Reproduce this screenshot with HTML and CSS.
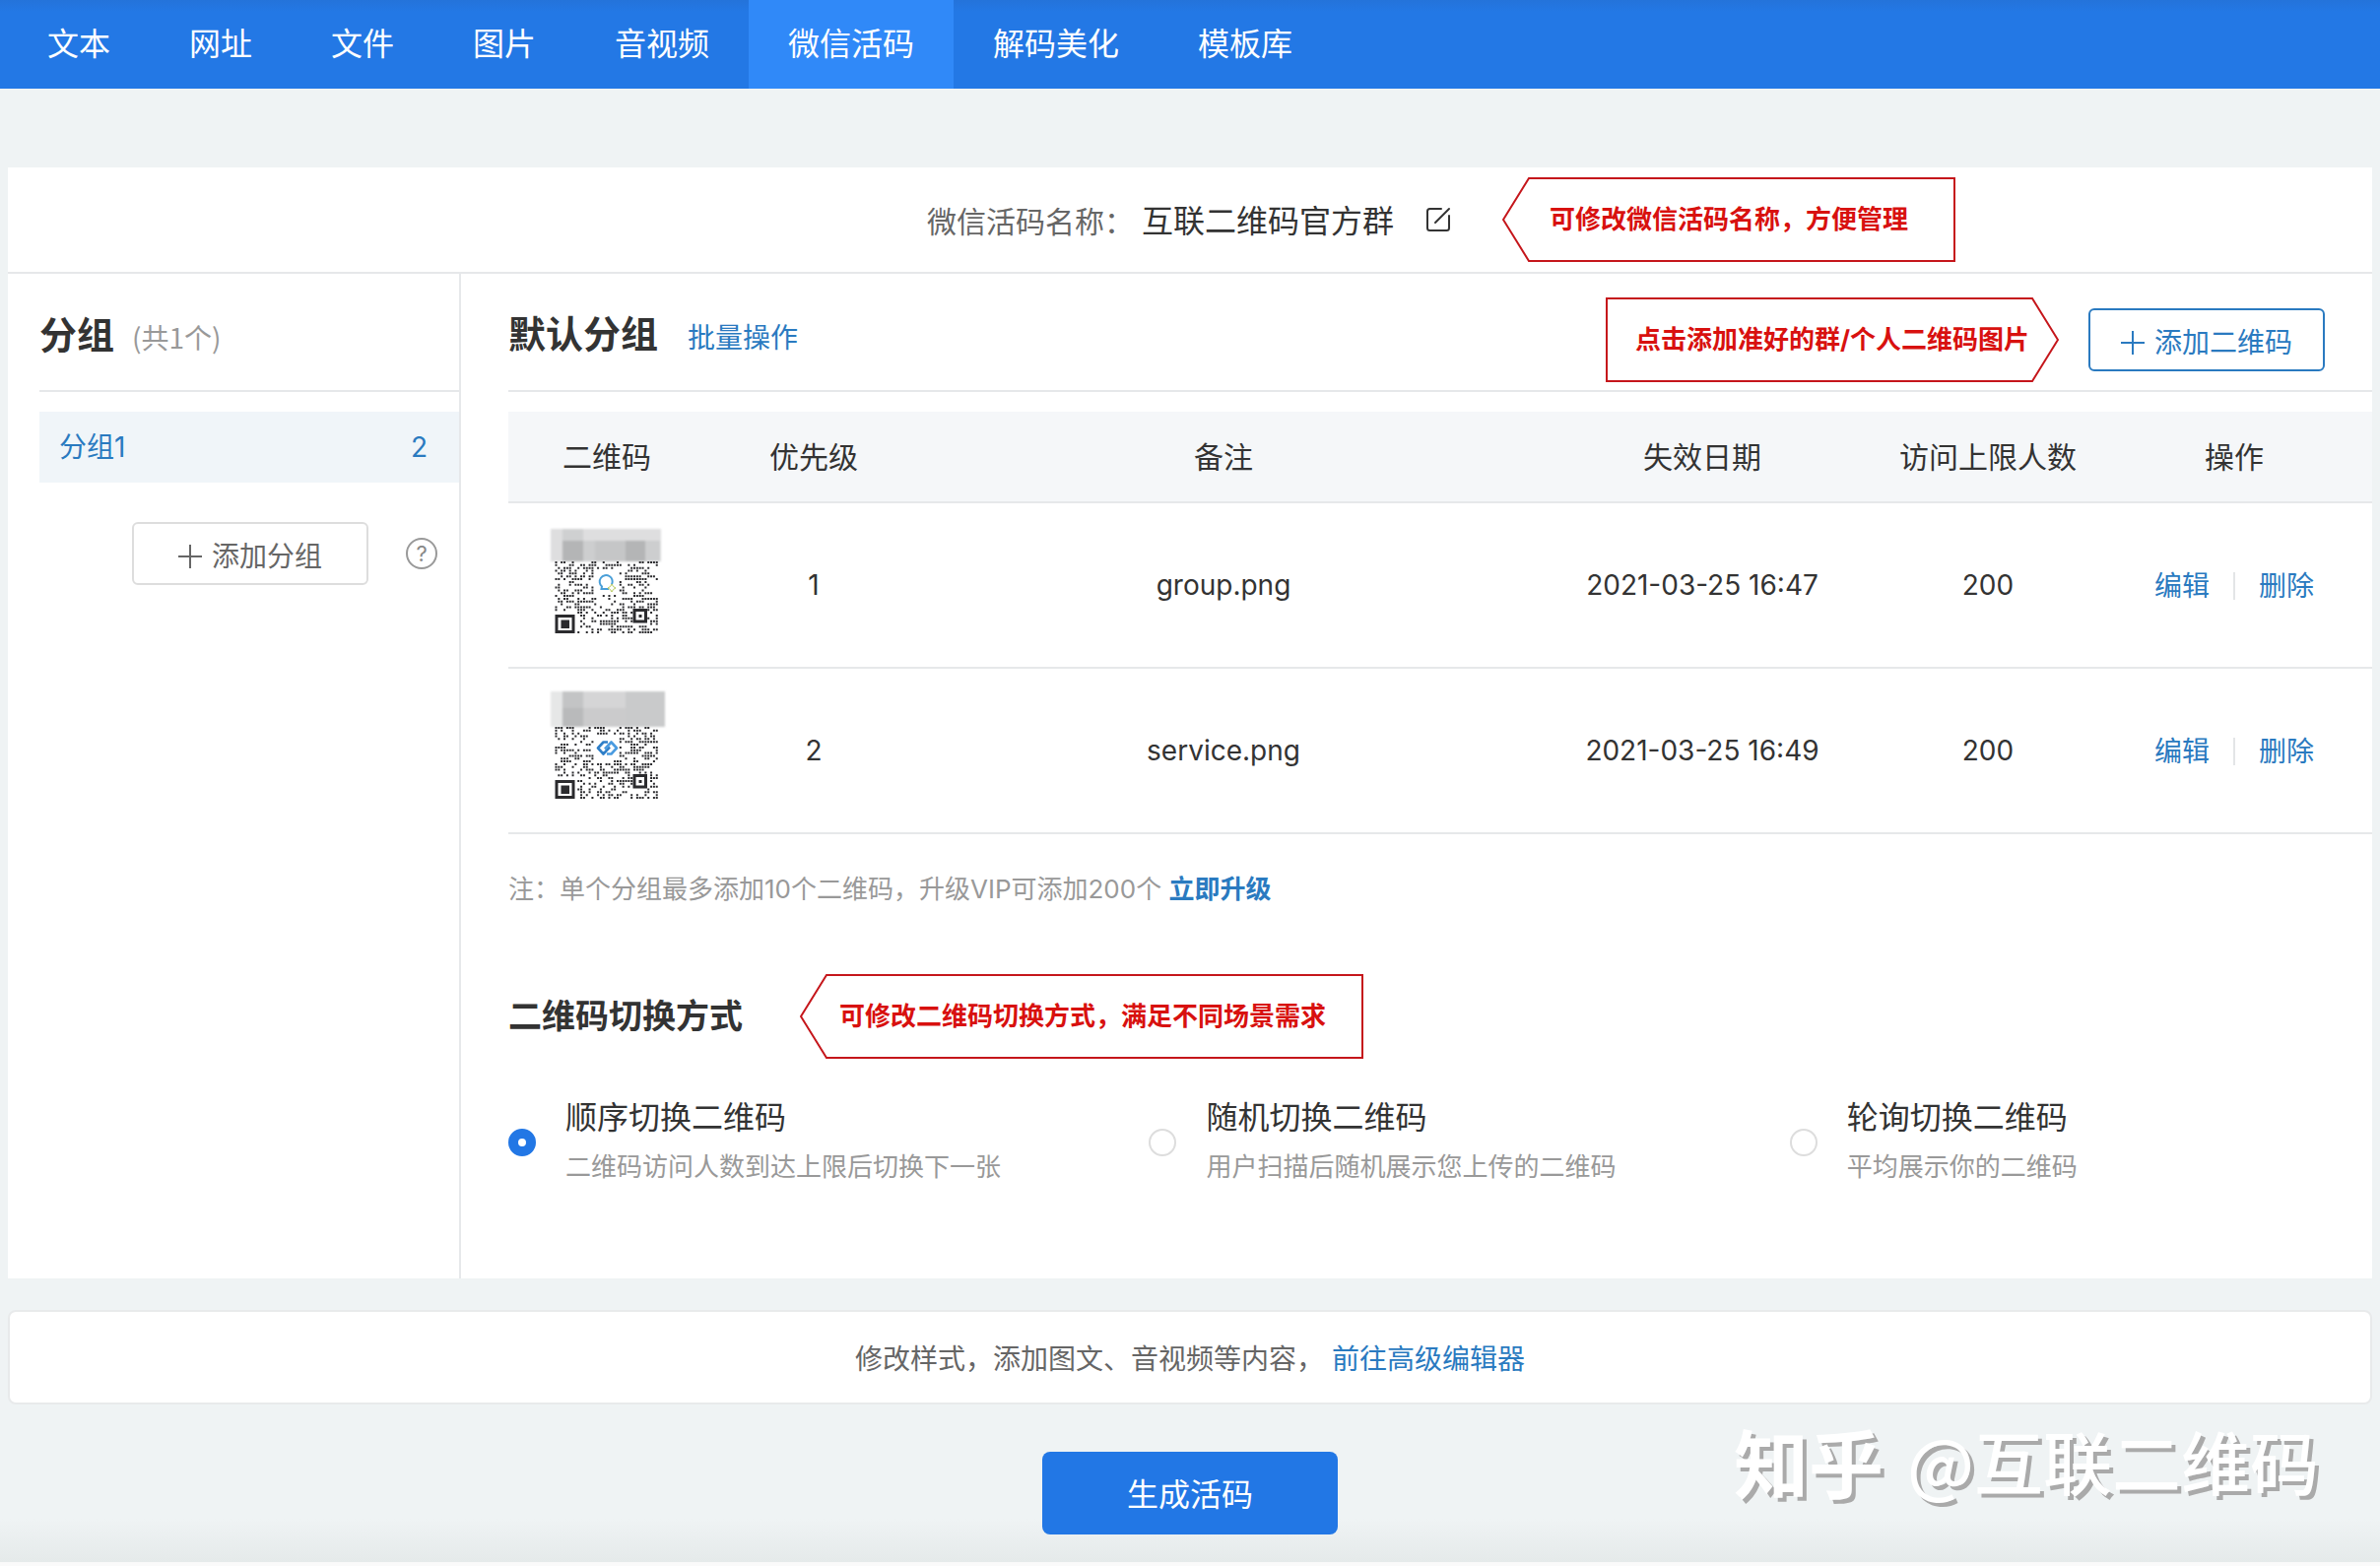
FILE: index.html
```html
<!DOCTYPE html>
<html lang="zh-CN">
<head>
<meta charset="utf-8">
<meta name="viewport" content="width=device-width, initial-scale=1">
<title>微信活码</title>
<link rel="stylesheet" href="styles.css">
</head>
<body>
<nav class="nav">
  <a class="nav-item" href="#">文本</a>
  <a class="nav-item" href="#">网址</a>
  <a class="nav-item" href="#">文件</a>
  <a class="nav-item" href="#">图片</a>
  <a class="nav-item" href="#">音视频</a>
  <a class="nav-item active" href="#" aria-current="page">微信活码</a>
  <a class="nav-item" href="#">解码美化</a>
  <a class="nav-item" href="#">模板库</a>
</nav>

<main class="page">
  <section class="card">
    <header class="name-bar">
      <span class="name-label">微信活码名称：</span>
      <h1 class="name-value">互联二维码官方群</h1>
      <button class="edit-button" type="button" aria-label="修改名称">
        <svg width="28" height="28" viewBox="0 0 28 28" fill="none" stroke="#333" stroke-width="2" stroke-linecap="round" stroke-linejoin="round">
          <path d="M16 3H4.500Q2 3 2 5.500V22.500Q2 25 4.500 25H21.500Q24 25 24 22.500V10"/>
          <path d="M10 17L24 3"/>
        </svg>
        <span class="callout callout-name">
          <svg class="callout-tip" width="28" height="86" viewBox="0 0 28 86"><path d="M28 1H27L1 43L27 85H28"/></svg>
          <span class="callout-body">可修改微信活码名称，方便管理</span>
        </span>
      </button>
    </header>

    <div class="columns">
      <aside class="sidebar">
        <div class="section-head">
          <div class="title-line">
            <h2 class="heading">分组</h2>
            <span class="count">(共1个)</span>
          </div>
        </div>
        <a class="group" href="#"><span>分组1</span><span>2</span></a>
        <div class="group-actions">
          <button class="button" type="button">
            <svg class="plus" width="24" height="24" viewBox="0 0 24 24"><path d="M12 0V24M0 12H24"/></svg>添加分组
          </button>
          <button class="help" type="button" aria-label="帮助">?</button>
        </div>
      </aside>

      <section class="content">
        <div class="section-head">
          <div class="title-line">
            <h2 class="heading">默认分组</h2>
            <a class="batch" href="#">批量操作</a>
          </div>
          <div class="head-actions">
            <div class="callout">
              <span class="callout-body body-left">点击添加准好的群/个人二维码图片</span>
              <svg class="callout-tip" width="28" height="86" viewBox="0 0 28 86"><path d="M0 1H1L27 43L1 85H0"/></svg>
            </div>
            <button class="button button-primary" type="button">
              <svg class="plus" width="24" height="24" viewBox="0 0 24 24"><path d="M12 0V24M0 12H24"/></svg>添加二维码
            </button>
          </div>
        </div>

        <table class="codes">
          <colgroup>
            <col class="col-code"><col class="col-rank"><col><col class="col-date"><col class="col-limit"><col class="col-ops">
          </colgroup>
          <thead>
            <tr><th>二维码</th><th>优先级</th><th>备注</th><th>失效日期</th><th>访问上限人数</th><th>操作</th></tr>
          </thead>
          <tbody>
            <tr>
              <td>
                <svg class="qr" width="128" height="128" viewBox="0 0 128 128" role="img" aria-label="group.png">
                  <g class="mosaic">
                    <path fill="#dededf" d="M7 7H119V40H7Z"/>
                    <path fill="#c5c6c7" d="M19 19H118V40H19Z"/>
                    <path fill="#cfd0d1" d="M19 7H40V19H19Z"/>
                    <path fill="#b4b5b6" d="M19 19H40V40H19ZM83 19H103V40H83Z"/>
                    <path fill="#cdcecf" d="M103 19H118V40H103ZM40 19H52V40H40Z"/>
                  </g>
                  <path class="dots" data-seed="7"/>
                  <path class="finder" d="M13 95.500H30V111.500H13Z"/>
                  <path class="finder-core" d="M17.500 99.500H26V108H17.500Z"/>
                  <path class="finder" d="M92 89.500H103.500V101H92Z"/>
                  <path class="finder-core" d="M96.500 94H99.500V97H96.500Z"/>
                  <path fill="none" stroke="#4a9fd8" stroke-width="2" d="M69 63.500A6.500 6.500 0 1 0 59 65.500L58.500 68H66"/>
                  <path fill="#fff" stroke="#b7c95c" d="M69 63L70.500 65.500L73 67L70.500 68.500L69 71L67.500 68.500L65 67L67.500 65.500Z"/>
                </svg>
              </td>
              <td>1</td><td>group.png</td><td>2021-03-25 16:47</td><td>200</td>
              <td><div class="ops"><a href="#">编辑</a><a href="#">删除</a></div></td>
            </tr>
            <tr>
              <td>
                <svg class="qr" width="128" height="128" viewBox="0 0 128 128" role="img" aria-label="service.png">
                  <g class="mosaic">
                    <path fill="#e6e7e7" d="M7 4H19V40H7Z"/>
                    <path fill="#d5d5d6" d="M19 4H123V21H19Z"/>
                    <path fill="#cbcbcc" d="M19 21H123V40H19Z"/>
                    <path fill="#c3c4c5" d="M19 4H40V21H19Z"/>
                    <path fill="#b9babb" d="M19 21H40V40H19Z"/>
                    <path fill="#c9cacb" d="M83 4H123V40H83Z"/>
                  </g>
                  <path class="dots" data-seed="23"/>
                  <path class="finder" d="M13 95.500H30V111.500H13Z"/>
                  <path class="finder-core" d="M17.500 99.500H26V108H17.500Z"/>
                  <path class="finder" d="M92 89.500H103.500V101H92Z"/>
                  <path class="finder-core" d="M96.500 94H99.500V97H96.500Z"/>
                  <path fill="none" stroke="#2f7fc8" stroke-width="2.600" stroke-linejoin="round" d="M65 55.500H60.500L55 61.500L60.500 67.500L67 60.500"/>
                  <path fill="none" stroke="#4a9be0" stroke-width="2.600" stroke-linejoin="round" d="M62 62.500L68.500 55.500L74 61.500L68.500 67.500H64"/>
                </svg>
              </td>
              <td>2</td><td>service.png</td><td>2021-03-25 16:49</td><td>200</td>
              <td><div class="ops"><a href="#">编辑</a><a href="#">删除</a></div></td>
            </tr>
          </tbody>
        </table>

        <p class="note">注：单个分组最多添加10个二维码，升级VIP可添加200个 <a href="#">立即升级</a></p>

        <div class="mode-head">
          <h2 class="subheading">二维码切换方式</h2>
          <div class="callout">
            <svg class="callout-tip" width="28" height="86" viewBox="0 0 28 86"><path d="M28 1H27L1 43L27 85H28"/></svg>
            <span class="callout-body body-mode">可修改二维码切换方式，满足不同场景需求</span>
          </div>
        </div>

        <div class="modes">
          <label class="mode">
            <input class="radio" type="radio" name="mode" checked>
            <span class="mode-text"><span class="mode-title">顺序切换二维码</span><span class="mode-desc">二维码访问人数到达上限后切换下一张</span></span>
          </label>
          <label class="mode">
            <input class="radio" type="radio" name="mode">
            <span class="mode-text"><span class="mode-title">随机切换二维码</span><span class="mode-desc">用户扫描后随机展示您上传的二维码</span></span>
          </label>
          <label class="mode">
            <input class="radio" type="radio" name="mode">
            <span class="mode-text"><span class="mode-title">轮询切换二维码</span><span class="mode-desc">平均展示你的二维码</span></span>
          </label>
        </div>
      </section>
    </div>
  </section>

  <p class="editor-link"><span>修改样式，添加图文、音视频等内容，</span><a href="#">前往高级编辑器</a></p>
</main>

<footer class="footer">
  <button class="submit" type="button">生成活码</button>
  <div class="watermark"><span class="brand">知乎</span><span>@互联二维码</span></div>
</footer>
<script src="qr.js"></script>
</body>
</html>
```
FILE: styles.css
```css
* { box-sizing: border-box; }

body {
  margin: 0;
  min-height: 100vh;
  display: flex;
  flex-direction: column;
  background: #eff3f4;
  color: #333;
  font-family: Inter, "Noto Sans CJK SC", sans-serif;
  font-size: 28px;
  line-height: 40px;
}

h1, h2, p { margin: 0; }
a { color: #2a7ac0; text-decoration: none; }
button { font: inherit; cursor: pointer; }
svg { display: block; flex: none; }

.nav {
  display: flex;
  height: 90px;
  padding-left: 8px;
  background: linear-gradient(#2473da, #2378e5 12px);
}
.nav-item {
  padding: 0 40px;
  font-size: 32px;
  line-height: 90px;
  color: #fff;
}
.nav-item.active { background: #3089f8; }

.page { padding: 80px 8px 0; }

.card { background: #fff; }

.name-bar {
  display: flex;
  align-items: center;
  justify-content: center;
  height: 108px;
  border-bottom: 2px solid #e6e8ea;
}
.name-label { padding-top: 4px; font-size: 30px; color: #666; }
.name-value {
  margin: 0 32px 0 8px;
  padding-top: 4px;
  font-size: 32px;
  font-weight: 400;
}
.edit-button {
  position: relative;
  padding: 0;
  border: 0;
  background: none;
}

.callout {
  display: flex;
  font-size: 26px;
  font-weight: 700;
  color: #d8110f;
  white-space: nowrap;
}
.callout-name {
  position: absolute;
  left: 100%;
  top: 50%;
  margin-left: 50px;
  transform: translateY(-50%);
}
.callout-tip path { fill: none; stroke: #c5161b; stroke-width: 2; }
.callout-body {
  height: 86px;
  padding: 0 46px 0 20px;
  border: 2px solid #c5161b;
  border-left: 0;
  line-height: 82px;
}
.body-left {
  padding: 0 2px 0 28px;
  border-left: 2px solid #c5161b;
  border-right: 0;
}
.body-mode { padding: 0 36px 0 12px; }

.columns { display: flex; min-height: 1020px; }
.sidebar {
  flex: none;
  width: 460px;
  padding-left: 32px;
  border-right: 2px solid #e6e8ea;
}
.content { flex: 1; min-width: 0; padding-left: 48px; }

.section-head {
  display: flex;
  align-items: center;
  height: 120px;
  margin-bottom: 20px;
  border-bottom: 2px solid #e6e8ea;
}
.title-line { display: flex; align-items: baseline; padding-top: 8px; }
.heading { font-size: 38px; }
.count { margin-left: 18px; color: #999; font-family: "Noto Sans CJK SC", sans-serif; }
.batch { margin-left: 30px; }
.head-actions {
  display: flex;
  align-items: center;
  gap: 30px;
  margin: 16px 48px 0 auto;
}

.group {
  display: flex;
  justify-content: space-between;
  padding: 16px 32px 16px 20px;
  background: #f0f5f9;
}
.group-actions {
  display: flex;
  align-items: center;
  justify-content: flex-end;
  gap: 38px;
  margin: 40px 22px 0 0;
}
.button {
  display: flex;
  align-items: center;
  justify-content: center;
  gap: 10px;
  width: 240px;
  height: 64px;
  padding: 6px 0 0;
  border: 2px solid #ddd;
  border-radius: 6px;
  background: #fff;
  color: #666;
}
.button-primary { border-color: #2a7ac0; color: #2a7ac0; }
.plus path { stroke: currentColor; stroke-width: 2; }
.help {
  width: 32px;
  height: 32px;
  padding: 0;
  border: 2px solid #999;
  border-radius: 50%;
  background: none;
  color: #888;
  font-size: 22px;
  line-height: 28px;
}

.codes {
  width: 100%;
  table-layout: fixed;
  border-collapse: collapse;
  text-align: center;
}
.col-code { width: 200px; }
.col-rank, .col-limit { width: 220px; }
.col-date { width: 360px; }
.col-ops { width: 280px; }
.codes th {
  height: 92px;
  padding: 0;
  background: #f5f7f9;
  font-size: 30px;
  font-weight: 400;
}
.codes tr { border-bottom: 2px solid #e6e8ea; }
.codes td { height: 168px; padding: 0; }
.qr { margin: 0 auto; }
.mosaic { filter: blur(1px); }
.dots { fill: #2b2b2e; }
.finder { fill: #fff; stroke: #2b2b2e; stroke-width: 3; }
.finder-core { fill: #2b2b2e; }
.ops { display: flex; align-items: center; justify-content: center; padding-top: 2px; }
.ops a { padding: 0 24px; line-height: 28px; }
.ops a + a { border-left: 2px solid #e3e5e7; }

.note { margin-top: 36px; font-size: 26px; color: #999; }
.note a { font-weight: 700; }

.mode-head { display: flex; align-items: center; gap: 58px; margin-top: 66px; }
.subheading { font-size: 34px; }

.modes {
  display: grid;
  grid-template-columns: 11fr 11fr 10fr;
  margin-top: 40px;
}
.mode { display: flex; align-items: center; gap: 30px; }
.radio {
  appearance: none;
  flex: none;
  width: 28px;
  height: 28px;
  margin: 0;
  border: 2px solid #ddd;
  border-radius: 50%;
  background: #fff;
}
.radio:checked { border: 10px solid #2277e5; }
.mode-text { display: flex; flex-direction: column; gap: 10px; }
.mode-title { font-size: 32px; }
.mode-desc { font-size: 26px; color: #999; }

.editor-link {
  display: flex;
  align-items: center;
  justify-content: center;
  gap: 8px;
  height: 96px;
  margin-top: 32px;
  padding-top: 4px;
  border: 2px solid #e8eaeb;
  border-radius: 8px;
  background: #fff;
  color: #666;
}

.footer {
  position: relative;
  flex: 1;
  padding-top: 48px;
  text-align: center;
  background: linear-gradient(to top, #fafafa 4px, #e5eaea 4px, rgba(239, 243, 244, 0) 48px);
}
.submit {
  width: 300px;
  height: 84px;
  padding: 4px 0 0;
  border: 0;
  border-radius: 8px;
  background: #2277e5;
  color: #fff;
  font-size: 32px;
}
.watermark {
  position: absolute;
  top: 12px;
  right: 62px;
  display: flex;
  align-items: center;
  gap: 24px;
  font-family: "Noto Sans CJK SC", sans-serif;
  font-size: 70px;
  font-weight: 500;
  line-height: 90px;
  color: #fff;
  text-shadow: 4px 4px 0 #aaa;
}
.brand { font-size: 76px; font-weight: 700; }
```
FILE: qr.js
```js
// Fills the dotted modules of each code: 37 columns, 26 visible rows.
const PITCH = 2.84;

function isReserved(col, row) {
  const finder = col < 8 && row > 17;
  const marker = col > 27 && col < 33 && row > 16 && row < 23;
  const logo = col > 13 && col < 23 && row > 2 && row < 12;
  return finder || marker || logo;
}

document.querySelectorAll('.dots').forEach((path) => {
  let seed = Number(path.dataset.seed);
  let d = '';
  for (let row = 0; row < 26; row += 1) {
    for (let col = 0; col < 37; col += 1) {
      seed = (seed * 16807) % 2147483647;
      if (seed / 2147483647 < 0.46 && !isReserved(col, row)) {
        d += `M${11.5 + col * PITCH} ${40 + row * PITCH}h2v2h-2z`;
      }
    }
  }
  path.setAttribute('d', d);
});
```
